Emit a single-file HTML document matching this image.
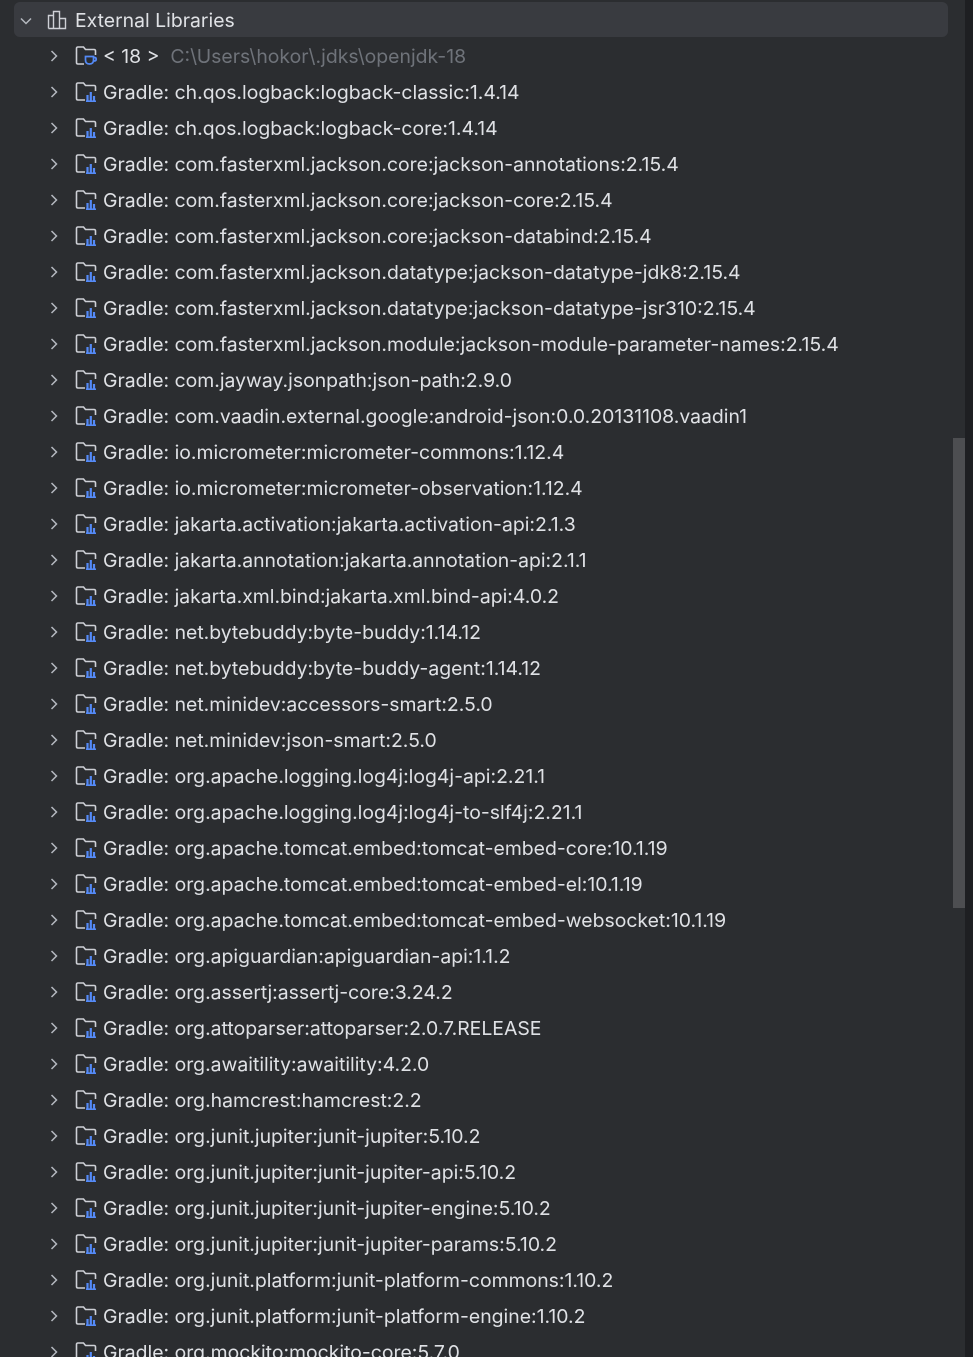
<!DOCTYPE html>
<html><head><meta charset="utf-8"><style>
html,body{margin:0;padding:0;background:#2b2d30;width:973px;height:1357px;overflow:hidden;position:relative;font-family:"Inter","Liberation Sans",sans-serif;}
.sel{position:absolute;left:14px;top:2px;width:934px;height:35px;background:#393b40;border-radius:6px;}
.row{position:absolute;left:0;height:36px;width:960px;color:#dfe1e5;font-size:19.4px;line-height:36px;white-space:nowrap;}
.row svg{position:absolute;}
.row .t{position:absolute;left:103px;top:0px;}
.g{color:#6f737a;}
.strip{position:absolute;right:0;top:0;width:8px;height:1357px;background:#1e1f22;}
.sb{position:absolute;left:953px;top:438px;width:12px;height:470px;background:#4d4e51;}
</style></head><body>
<div class="sel"></div>
<div class="row" style="top:2px">
<svg style="left:18px;top:11px" width="16" height="16" viewBox="0 0 16 16"><path d="M3 5.5L8 10.5L13 5.5" fill="none" stroke="#b4b8bf" stroke-width="1.5"/></svg>
<svg style="left:47px;top:8px" width="22" height="20" viewBox="0 0 22 20"><path d="M1.5 18.5V5.5H6.5V18.5M6.5 18.5V1.5H12.5V18.5M12.5 18.5V8.5H18.5V18.5H1.5" fill="none" stroke="#ced0d6" stroke-width="1.4"/></svg>
<span class="t" style="left:75px">External Libraries</span>
</div>
<div id="rows"></div>
<div class="strip"></div>
<div class="sb"></div>
<script>
var items=["__JDK__","ch.qos.logback:logback-classic:1.4.14","ch.qos.logback:logback-core:1.4.14","com.fasterxml.jackson.core:jackson-annotations:2.15.4","com.fasterxml.jackson.core:jackson-core:2.15.4","com.fasterxml.jackson.core:jackson-databind:2.15.4","com.fasterxml.jackson.datatype:jackson-datatype-jdk8:2.15.4","com.fasterxml.jackson.datatype:jackson-datatype-jsr310:2.15.4","com.fasterxml.jackson.module:jackson-module-parameter-names:2.15.4","com.jayway.jsonpath:json-path:2.9.0","com.vaadin.external.google:android-json:0.0.20131108.vaadin1","io.micrometer:micrometer-commons:1.12.4","io.micrometer:micrometer-observation:1.12.4","jakarta.activation:jakarta.activation-api:2.1.3","jakarta.annotation:jakarta.annotation-api:2.1.1","jakarta.xml.bind:jakarta.xml.bind-api:4.0.2","net.bytebuddy:byte-buddy:1.14.12","net.bytebuddy:byte-buddy-agent:1.14.12","net.minidev:accessors-smart:2.5.0","net.minidev:json-smart:2.5.0","org.apache.logging.log4j:log4j-api:2.21.1","org.apache.logging.log4j:log4j-to-slf4j:2.21.1","org.apache.tomcat.embed:tomcat-embed-core:10.1.19","org.apache.tomcat.embed:tomcat-embed-el:10.1.19","org.apache.tomcat.embed:tomcat-embed-websocket:10.1.19","org.apiguardian:apiguardian-api:1.1.2","org.assertj:assertj-core:3.24.2","org.attoparser:attoparser:2.0.7.RELEASE","org.awaitility:awaitility:4.2.0","org.hamcrest:hamcrest:2.2","org.junit.jupiter:junit-jupiter:5.10.2","org.junit.jupiter:junit-jupiter-api:5.10.2","org.junit.jupiter:junit-jupiter-engine:5.10.2","org.junit.jupiter:junit-jupiter-params:5.10.2","org.junit.platform:junit-platform-commons:1.10.2","org.junit.platform:junit-platform-engine:1.10.2","org.mockito:mockito-core:5.7.0"];
var folder='<path d="M10 19H3Q1.5 19 1.5 17.5V3.5Q1.5 2 3 2H8.5L10.5 4.5H19Q20.5 4.5 20.5 6V10" fill="none" stroke="#ced0d6" stroke-width="1.6"/>';
var lib='<rect x="10" y="10.5" width="12" height="10" rx="1" fill="#2b2d30"/><path d="M12.5 20V14M15.8 20V11M19 20V15" fill="none" stroke="#548af7" stroke-width="2.2"/><path d="M11 20.2H21" stroke="#548af7" stroke-width="1.6"/>';
var cup='<rect x="9" y="10" width="13" height="11" fill="#2b2d30"/><path d="M10.5 11.5H18.5V15Q18.5 19 14.5 19Q10.5 19 10.5 15ZM18.5 12.5H19.5Q21.2 12.5 21.2 14.2Q21.2 16 19 16" fill="none" stroke="#548af7" stroke-width="1.7"/>';
var h='';
items.forEach(function(it,i){
 var top=2+36*(i+1);
 var jdk=it=="__JDK__";
 h+='<div class="row" style="top:'+top+'px">'+
 '<svg style="left:46px;top:10px" width="16" height="16" viewBox="0 0 16 16"><path d="M5.5 3L10.5 8L5.5 13" fill="none" stroke="#b4b8bf" stroke-width="1.5"/></svg>'+
 '<svg style="left:75px;top:7px" width="24" height="22" viewBox="0 0 24 22">'+folder+(jdk?cup:lib)+'</svg>'+
 '<span class="t">'+(jdk?'&lt; 18 &gt;&nbsp; <span class="g">C:\\Users\\hokor\\.jdks\\openjdk-18</span>':'Gradle: '+it)+'</span></div>';
});
document.getElementById('rows').innerHTML=h;
</script>
</body></html>
